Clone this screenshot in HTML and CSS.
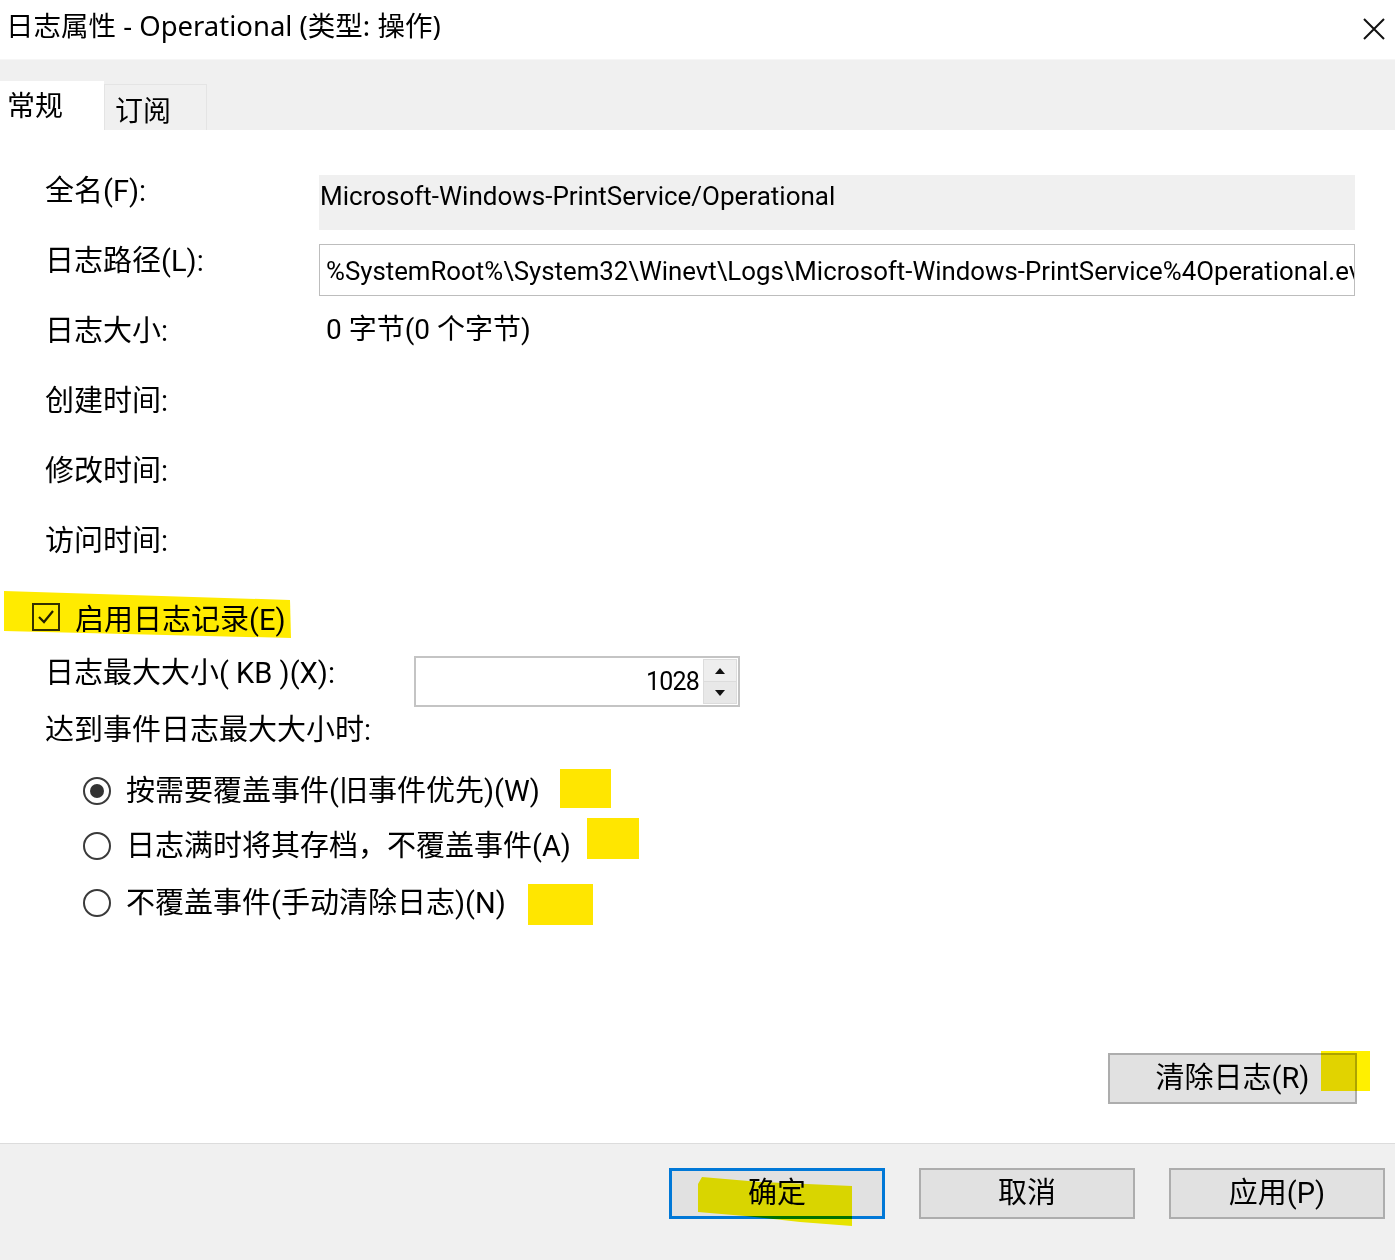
FILE: index.html
```html
<!DOCTYPE html>
<html lang="zh-CN">
<head>
<meta charset="utf-8">
<title>日志属性</title>
<link rel="stylesheet" href="styles.css">
</head>
<body>
<div class="dialog">
  <div class="titlebar">
    <div class="title">日志属性 - Operational (类型: 操作)</div>
    <svg class="close" width="22" height="22" viewBox="0 0 22 22"><path d="M1 1 L21 21 M21 1 L1 21" stroke="#111" stroke-width="2" fill="none"/></svg>
  </div>
  <div class="tabstrip">
    <div class="tab active">常规</div>
    <div class="tab">订阅</div>
  </div>
  <div class="content">
    <div class="props">
      <div class="row">
        <div class="label">全名(F):</div>
        <div class="readonly-field">Microsoft-Windows-PrintService/Operational</div>
      </div>
      <div class="row">
        <div class="label">日志路径(L):</div>
        <div class="text-field">%SystemRoot%\System32\Winevt\Logs\Microsoft-Windows-PrintService%4Operational.evtx</div>
      </div>
      <div class="row">
        <div class="label">日志大小:</div>
        <div class="value">0 字节(0 个字节)</div>
      </div>
      <div class="row"><div class="label">创建时间:</div></div>
      <div class="row"><div class="label">修改时间:</div></div>
      <div class="row"><div class="label">访问时间:</div></div>
    </div>

    <div class="check-row">
      <span class="checkbox">
        <svg width="22" height="20" viewBox="0 0 22 20"><path d="M4 10 L9 15 L18 4" stroke="#222" stroke-width="2.2" fill="none"/></svg>
      </span>
      <span class="check-label">启用日志记录(E)</span>
    </div>

    <div class="size-row">
      <div class="label">日志最大大小( KB )(X):</div>
      <div class="spin">
        <span class="spin-value">1028</span>
        <span class="spin-btns">
          <span class="spin-btn"><svg width="10" height="6" viewBox="0 0 10 6"><path d="M0 6 L5 0 L10 6 Z" fill="#111"/></svg></span>
          <span class="spin-btn"><svg width="10" height="6" viewBox="0 0 10 6"><path d="M0 0 L5 6 L10 0 Z" fill="#111"/></svg></span>
        </span>
      </div>
    </div>

    <div class="reach-label">达到事件日志最大大小时:</div>

    <div class="radios">
      <div class="radio-row"><span class="radio checked"></span><span>按需要覆盖事件(旧事件优先)(W)</span></div>
      <div class="radio-row r2"><span class="radio"></span><span>日志满时将其存档，不覆盖事件(A)</span></div>
      <div class="radio-row r3"><span class="radio"></span><span>不覆盖事件(手动清除日志)(N)</span></div>
    </div>

    <div class="clear-row">
      <button class="btn clear-btn">清除日志(R)</button>
    </div>
  </div>
  <div class="footer">
    <button class="btn default">确定</button>
    <button class="btn">取消</button>
    <button class="btn">应用(P)</button>
  </div>

  <svg class="marks" width="1395" height="1260" viewBox="0 0 1395 1260">
    <polygon points="4,591 290,600 291,638 4,631" fill="#ffeb00"/>
    <rect x="560" y="769" width="51" height="39" fill="#ffe600"/>
    <rect x="587" y="818" width="52" height="41" fill="#ffe600"/>
    <rect x="528" y="884" width="65" height="41" fill="#ffe600"/>
    <rect x="1321" y="1051" width="49" height="40" fill="#fff000"/>
    <polygon points="702,1177 760,1182 852,1186 852,1226 800,1222 745,1216 698,1212 698,1184" fill="#f6f200"/>
  </svg>
</div>
</body>
</html>
```
FILE: styles.css
```css
* { box-sizing: border-box; }
html, body { margin: 0; padding: 0; }
body {
  width: 1395px;
  height: 1260px;
  overflow: hidden;
  background: #fff;
  font-family: "Roboto", "Noto Sans CJK SC", sans-serif;
  color: #000;
}
.dialog {
  position: relative;
  width: 1395px;
  height: 1260px;
  display: flex;
  flex-direction: column;
}
.titlebar {
  height: 60px;
  display: flex;
  align-items: center;
  justify-content: space-between;
  padding: 0 10px 8px 6px;
  background: #fff;
  border-bottom: 1px solid #f6f6f6;
}
.title {
  font-family: "Noto Sans", "Noto Sans CJK SC", sans-serif;
  font-size: 27.5px;
  line-height: 36px;
}
.close { margin-top: 6px; }
.tabstrip {
  height: 70px;
  background: #f0f0f0;
  display: flex;
  align-items: flex-end;
}
.tab {
  font-size: 28px;
  line-height: 36px;
  padding: 0 0 0 10px;
}
.tab.active {
  width: 104px;
  height: 49px;
  background: #fff;
  padding-left: 7px;
  padding-top: 8px;
}
.tab:not(.active) {
  width: 103px;
  height: 46px;
  border: 1px solid #e4e4e4;
  border-bottom: none;
  padding-top: 9px;
}
.content {
  flex: 1;
  background: #fff;
  display: flex;
  flex-direction: column;
  padding-top: 27px;
}
.props { display: flex; flex-direction: column; }
.row {
  height: 70px;
  display: flex;
  align-items: flex-start;
}
.label {
  width: 274px;
  margin-left: 45px;
  font-size: 29px;
  line-height: 69px;
  white-space: nowrap;
}
.readonly-field {
  width: 1036px;
  height: 55px;
  margin-top: 18px;
  background: #f0f0f0;
  font-size: 26px;
  line-height: 42px;
  padding-left: 1px;
}
.text-field {
  width: 1036px;
  height: 52px;
  margin-top: 17px;
  border: 1px solid #bdbdbd;
  font-size: 25.8px;
  line-height: 52px;
  padding-left: 6px;
  white-space: nowrap;
  overflow: hidden;
}
.value {
  font-size: 28px;
  line-height: 66px;
  padding-left: 7px;
}
.check-row {
  margin-top: 22px;
  height: 36px;
  display: flex;
  align-items: center;
  padding-left: 32px;
}
.checkbox {
  width: 28px;
  height: 28px;
  border: 2px solid #333;
  display: flex;
  align-items: center;
  justify-content: center;
  margin-right: 15px;
}
.check-label { font-size: 29px; line-height: 36px; margin-top: 5px; }
.size-row {
  margin-top: 21px;
  display: flex;
  align-items: flex-start;
}
.size-row .label {
  width: 369px;
  line-height: 35px;
}
.spin {
  width: 326px;
  height: 51px;
  border: 2px solid #c4c4c4;
  display: flex;
  align-items: center;
  justify-content: flex-end;
  padding: 1px;
}
.spin-value {
  font-size: 25px;
  letter-spacing: -0.8px;
  line-height: 44px;
  margin-right: 4px;
}
.spin-btns {
  width: 34px;
  height: 100%;
  display: flex;
  flex-direction: column;
}
.spin-btn {
  flex: 1;
  display: flex;
  align-items: center;
  justify-content: center;
  background: #eeeeee;
  border: 1px solid #dcdcdc;
}
.spin-btn + .spin-btn { border-top: none; background: #e8e8e8; }
.reach-label {
  margin-left: 45px;
  margin-top: 4px;
  font-size: 29px;
  line-height: 38px;
}
.radios {
  margin-top: 24px;
  padding-left: 83px;
  display: flex;
  flex-direction: column;
}
.radio-row {
  display: flex;
  align-items: center;
  height: 36px;
  font-size: 29px;
  line-height: 38px;
}
.radio-row.r2 { margin-top: 19px; }
.radio-row.r3 { margin-top: 21px; }
.radio {
  width: 28px;
  height: 28px;
  border: 2px solid #3a3a3a;
  border-radius: 50%;
  margin-right: 15px;
  display: flex;
  align-items: center;
  justify-content: center;
  flex: none;
}
.radio.checked::after {
  content: "";
  width: 14px;
  height: 14px;
  border-radius: 50%;
  background: #333;
}
.clear-row {
  margin-top: auto;
  margin-bottom: 39px;
  display: flex;
  justify-content: flex-end;
  padding-right: 38px;
}
.btn {
  font-family: "Roboto", "Noto Sans CJK SC", sans-serif;
  font-size: 29px;
  color: #000;
  background: #e1e1e1;
  border: 2px solid #adadad;
  height: 51px;
  padding: 0;
  line-height: 45px;
}
.clear-btn { width: 249px; }
.footer {
  height: 117px;
  background: #f0f0f0;
  border-top: 1px solid #dcdcdc;
  display: flex;
  justify-content: flex-end;
  align-items: flex-start;
  padding-top: 24px;
  padding-right: 10px;
  gap: 34px;
}
.footer .btn { width: 216px; }
.btn.default { border: 3px solid #0078d7; }
.marks {
  position: absolute;
  left: 0;
  top: 0;
  mix-blend-mode: multiply;
  pointer-events: none;
}
```
